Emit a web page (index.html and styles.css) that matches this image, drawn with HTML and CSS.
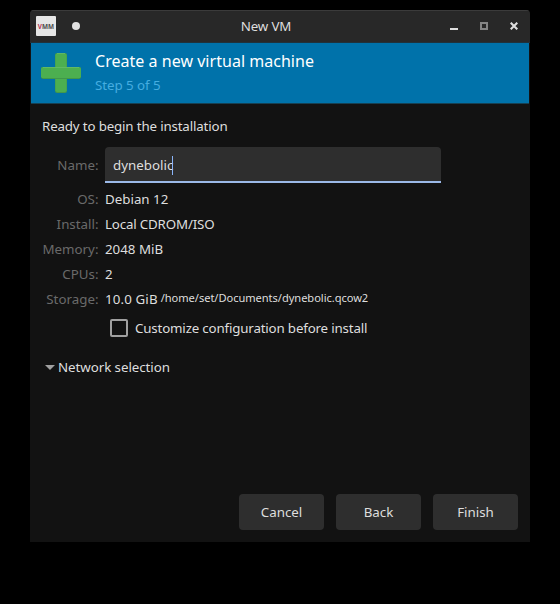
FILE: index.html
```html
<!DOCTYPE html>
<html lang="en">
<head>
<meta charset="utf-8">
<title>New VM</title>
<link rel="stylesheet" href="styles.css">
</head>
<body>
<main class="window">
  <header class="titlebar">
    <div class="title-left">
      <svg class="app-icon" width="20" height="20" viewBox="0 0 20 20">
        <rect width="20" height="20" rx="1" fill="#e6e6e6"/>
        <text class="logo-text" x="1.8" y="12.7" textLength="16.2" lengthAdjust="spacingAndGlyphs"><tspan fill="#b83255">V</tspan><tspan fill="#4c4c4c">MM</tspan></text>
      </svg>
      <span class="pin"></span>
    </div>
    <div class="title">New VM</div>
    <div class="controls">
      <svg width="8" height="8" viewBox="0 0 8 8"><path d="M0 7h8" stroke="#dedede" stroke-width="2"/></svg>
      <svg width="8" height="8" viewBox="0 0 8 8"><path d="M1 1h6v6H1z" fill="none" stroke="#858585" stroke-width="2"/></svg>
      <svg width="8" height="8" viewBox="0 0 8 8"><path d="M.7 .7l6.6 6.6M7.3 .7L.7 7.3" stroke="#dedede" stroke-width="2.1"/></svg>
    </div>
  </header>
  <section class="banner">
    <svg class="plus" width="40" height="40" viewBox="0 0 40 40">
      <rect x="14" y="0" width="12" height="40" rx="2" fill="#43984c"/>
      <rect x="14.5" y="0.5" width="11" height="38.5" rx="1.7" fill="#4caf50"/>
      <rect x="0" y="14" width="40" height="12" rx="2" fill="#3d9147"/>
      <rect x="0" y="14" width="40" height="11.2" rx="2" fill="#4caf50"/>
      <path d="M2 14.5h36M16 .5h8" stroke="#67bb6a" stroke-width=".8"/>
    </svg>
    <div>
      <h1>Create a new virtual machine</h1>
      <p class="step">Step 5 of 5</p>
    </div>
  </section>
  <section class="content">
    <p class="ready">Ready to begin the installation</p>
    <div class="form">
      <span class="label name-label">Name:</span>
      <div class="entry">dynebolic<span class="caret"></span></div>
      <span class="label">OS:</span><span>Debian 12</span>
      <span class="label">Install:</span><span class="tight">Local CDROM/ISO</span>
      <span class="label">Memory:</span><span>2048 MiB</span>
      <span class="label">CPUs:</span><span>2</span>
      <span class="label">Storage:</span>
      <span class="storage"><span class="size">10.0 GiB</span><small>/home/set/Documents/dynebolic.qcow2</small></span>
    </div>
    <div class="check tight"><span class="box"></span>Customize configuration before install</div>
    <div class="expander">
      <svg width="10" height="5" viewBox="0 0 10 5"><path d="M0 0h10L5 5z" fill="#a0a0a0"/></svg>
      Network selection
    </div>
    <footer class="actions">
      <button>Cancel</button><button>Back</button><button>Finish</button>
    </footer>
  </section>
</main>
</body>
</html>
```
FILE: styles.css
```css
* { box-sizing: border-box; }
body {
  margin: 0;
  padding: 10px 30px;
  background: #000;
  color: #dedede;
  font: 13.333px/20px "Noto Sans", sans-serif;
}
h1, p { margin: 0; font-weight: 400; }
svg { display: block; }
.window {
  display: flex;
  flex-direction: column;
  width: 500px;
  height: 532px;
  background: #121212;
  border-radius: 4px 4px 0 0;
  overflow: hidden;
}
.titlebar {
  display: grid;
  grid-template-columns: 1fr auto 1fr;
  align-items: center;
  height: 33px;
  padding: 0 12px 0 6px;
  background: #282828;
  border-top: 1px solid #3b3b3b;
  border-bottom: 1px solid #20323c;
}
.title-left { display: flex; align-items: center; gap: 16px; }
.app-icon { margin-top: -1px; }
.logo-text { font: bold 7px "Noto Sans", sans-serif; }
.pin { width: 8px; height: 8px; margin-top: -2px; border-radius: 50%; background: #e2e2e2; }
.title { margin: -1px 11px 0 -11px; letter-spacing: -0.15px; }
.controls { display: flex; justify-content: flex-end; gap: 22px; margin-top: -2px; }
.banner {
  display: flex;
  gap: 14px;
  height: 61px;
  margin: 0 1px;
  padding: 10px 10px 0;
  background: #0072aa;
  border-bottom: 1px solid #174052;
}
.banner h1 {
  margin-top: -4px;
  font-size: 16px;
  line-height: 24px;
  letter-spacing: 0.03px;
  color: #fff;
}
.step { margin-top: 2px; color: #45ade0; letter-spacing: -0.05px; }
.content {
  display: flex;
  flex: 1;
  flex-direction: column;
  padding: 12px;
}
.ready { margin-bottom: 11px; letter-spacing: -0.16px; }
.tight { letter-spacing: -0.17px; }
.form {
  display: grid;
  grid-template-columns: 56.5px 336px;
  grid-template-rows: 36px 20px;
  grid-auto-rows: 20px;
  column-gap: 6.5px;
  row-gap: 5px;
}
.form > span { position: relative; top: 1px; }
.label { color: #6a6a6a; text-align: right; white-space: nowrap; }
.form .name-label { top: 0; align-self: center; }
.entry {
  display: flex;
  align-items: center;
  height: 36px;
  padding: 2px 8px 0;
  background: #2e2e2e;
  border-bottom: 2px solid #9bb9e8;
  border-radius: 4px 4px 0 0;
}
.caret { width: 1px; height: 19px; margin-left: -1px; background: #8ab4f8; }
.storage { display: flex; gap: 3px; white-space: nowrap; }
.size { letter-spacing: 0.12px; }
.storage small { font-size: 11.11px; line-height: 18px; letter-spacing: -0.05px; }
.check { display: flex; align-items: center; gap: 7px; height: 20px; margin: 10px 0 0 68px; }
.box { width: 18px; height: 18px; border: 2px solid #a0a0a0; border-radius: 2px; }
.expander { display: flex; align-items: center; gap: 3px; height: 20px; margin: 19px 0 0 3px; letter-spacing: -0.06px; }
.actions { display: flex; justify-content: flex-end; gap: 12px; margin-top: auto; }
button {
  width: 85px;
  height: 36px;
  padding: 0;
  border: 0;
  border-radius: 4px;
  background: #2e2e2e;
  color: inherit;
  font: inherit;
}
```
